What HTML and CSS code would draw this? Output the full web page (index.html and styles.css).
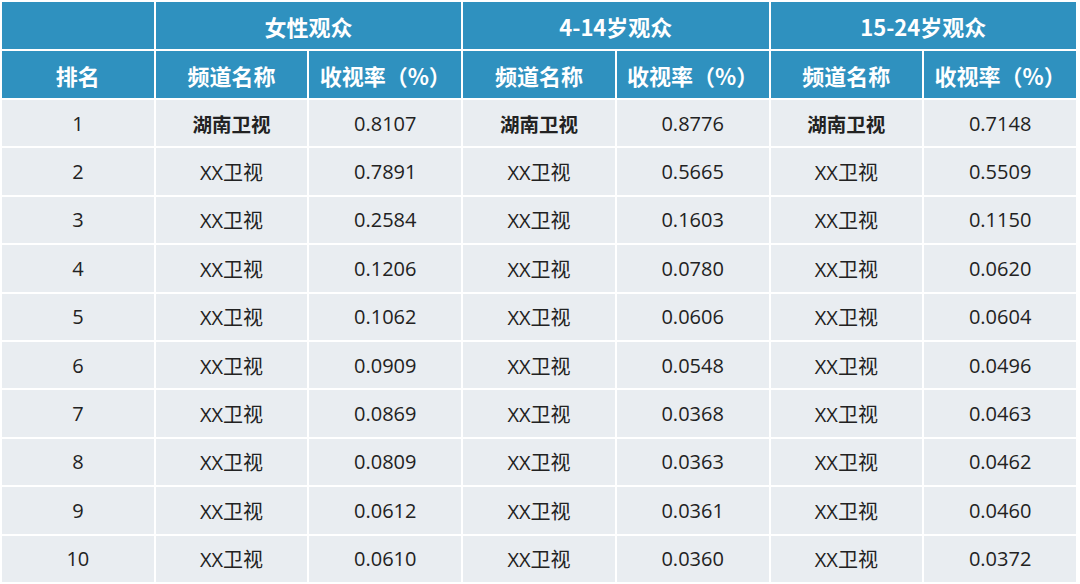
FILE: index.html
```html
<!DOCTYPE html>
<html lang="zh">
<head>
<meta charset="utf-8">
<link rel="stylesheet" href="styles.css">
</head>
<body>
<table class="rank">
  <colgroup>
    <col class="c"><col class="c"><col class="c"><col class="c"><col class="c"><col class="c"><col class="c">
  </colgroup>
  <thead>
    <tr class="h1">
      <th></th>
      <th colspan="2">女性观众</th>
      <th colspan="2">4-14岁观众</th>
      <th colspan="2">15-24岁观众</th>
    </tr>
    <tr class="h2">
      <th>排名</th>
      <th>频道名称</th><th>收视率（%）</th>
      <th>频道名称</th><th>收视率（%）</th>
      <th>频道名称</th><th>收视率（%）</th>
    </tr>
  </thead>
  <tbody>
    <tr><td>1</td><td class="b">湖南卫视</td><td>0.8107</td><td class="b">湖南卫视</td><td>0.8776</td><td class="b">湖南卫视</td><td>0.7148</td></tr>
    <tr><td>2</td><td>XX卫视</td><td>0.7891</td><td>XX卫视</td><td>0.5665</td><td>XX卫视</td><td>0.5509</td></tr>
    <tr><td>3</td><td>XX卫视</td><td>0.2584</td><td>XX卫视</td><td>0.1603</td><td>XX卫视</td><td>0.1150</td></tr>
    <tr><td>4</td><td>XX卫视</td><td>0.1206</td><td>XX卫视</td><td>0.0780</td><td>XX卫视</td><td>0.0620</td></tr>
    <tr><td>5</td><td>XX卫视</td><td>0.1062</td><td>XX卫视</td><td>0.0606</td><td>XX卫视</td><td>0.0604</td></tr>
    <tr><td>6</td><td>XX卫视</td><td>0.0909</td><td>XX卫视</td><td>0.0548</td><td>XX卫视</td><td>0.0496</td></tr>
    <tr><td>7</td><td>XX卫视</td><td>0.0869</td><td>XX卫视</td><td>0.0368</td><td>XX卫视</td><td>0.0463</td></tr>
    <tr><td>8</td><td>XX卫视</td><td>0.0809</td><td>XX卫视</td><td>0.0363</td><td>XX卫视</td><td>0.0462</td></tr>
    <tr><td>9</td><td>XX卫视</td><td>0.0612</td><td>XX卫视</td><td>0.0361</td><td>XX卫视</td><td>0.0460</td></tr>
    <tr><td>10</td><td>XX卫视</td><td>0.0610</td><td>XX卫视</td><td>0.0360</td><td>XX卫视</td><td>0.0372</td></tr>
  </tbody>
</table>
</body>
</html>
```
FILE: styles.css
```css
html, body {
  margin: 0;
  padding: 0;
  background: #ffffff;
}
.rank {
  width: 1078px;
  border-collapse: collapse;
  table-layout: fixed;
  font-family: "Open Sans", "Noto Sans CJK SC", sans-serif;
}
.rank th, .rank td {
  border: 2px solid #ffffff;
  text-align: center;
  vertical-align: middle;
  padding: 0;
}
.rank th {
  background: #2f91bf;
  color: #ffffff;
  font-family: "Noto Sans CJK SC", sans-serif;
  font-weight: 700;
  font-size: 22px;
}
.rank .h1 th { height: 47px; }
.rank .h2 th { height: 47px; }
.rank td {
  background: #e9edf1;
  color: #222222;
  font-size: 20px;
  height: 46.4px;
}
.rank td.b {
  font-family: "Noto Sans CJK SC", sans-serif;
  font-weight: 700;
  font-size: 19.5px;
}
```
